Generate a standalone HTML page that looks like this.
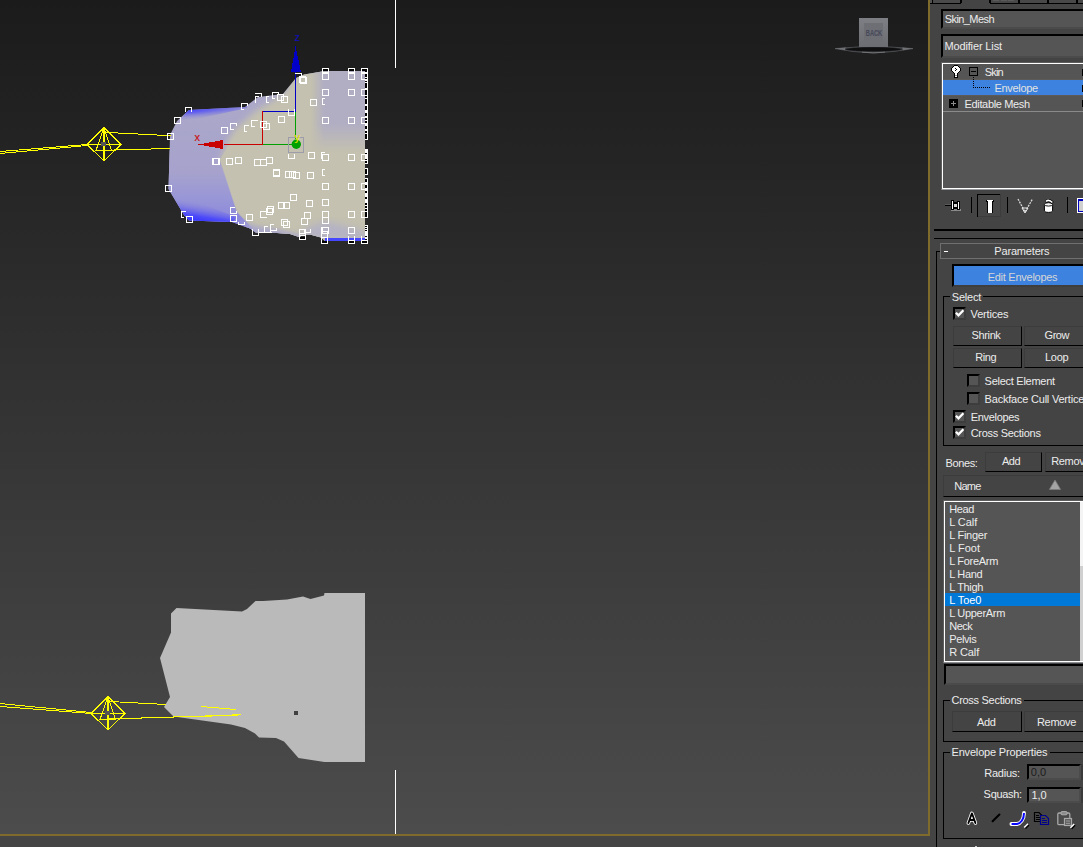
<!DOCTYPE html>
<html lang="en"><head><meta charset="utf-8"><title>Skin Envelope</title>
<style>
html,body{margin:0;padding:0;background:#444444;}
body{width:1083px;height:847px;overflow:hidden;position:relative;font-family:"Liberation Sans",sans-serif;font-size:11px;line-height:13px;color:#ececec;}
#vp{position:absolute;left:0;top:0;display:block;}
#panel{position:absolute;left:930px;top:0;width:153px;height:847px;background:#444444;overflow:hidden;}
#panel *{position:absolute;box-sizing:border-box;}
#panel svg{overflow:visible;}
.t{white-space:nowrap;height:13px;}
.btn{background:#444444;border:1px solid #000;border-top-color:#3c3c3c;border-left-color:#3c3c3c;}
.fld{background:#555555;border-top:2px solid #000;border-left:2px solid #000;border-bottom:2px solid #4b4b4b;border-right:2px solid #4b4b4b;}
.chk{background:#555555;border:2px solid #3d3d3d;border-top:2px solid #000;border-left:2px solid #000;}

</style></head>
<body>
<svg id="vp" width="930" height="847" viewBox="0 0 930 847" shape-rendering="crispEdges">
<defs>
<linearGradient id="bg" x1="0" y1="0" x2="0" y2="1">
<stop offset="0" stop-color="#1b1b1b"/><stop offset="1" stop-color="#4c4c4c"/>
</linearGradient>
<linearGradient id="cube" x1="0" y1="0" x2="0" y2="1">
<stop offset="0" stop-color="#7d7f84"/><stop offset="1" stop-color="#6b6d72"/>
</linearGradient>
<linearGradient id="lav" x1="0" y1="0" x2="0" y2="1">
<stop offset="0" stop-color="#aaa7c8"/><stop offset="0.45" stop-color="#a5a1cc"/><stop offset="1" stop-color="#8f8ad8"/>
</linearGradient>
<linearGradient id="rgt" x1="0" y1="0" x2="0" y2="1">
<stop offset="0" stop-color="#b1aec3"/><stop offset="0.6" stop-color="#b1aec3"/><stop offset="1" stop-color="#b1aec3" stop-opacity="0"/>
</linearGradient>
<filter id="b25" x="-20%" y="-20%" width="140%" height="140%"><feGaussianBlur stdDeviation="3"/></filter>
<filter id="b2" x="-20%" y="-20%" width="140%" height="140%"><feGaussianBlur stdDeviation="2"/></filter>
<filter id="b3" x="-20%" y="-20%" width="140%" height="140%"><feGaussianBlur stdDeviation="3.5"/></filter>
<filter id="b5" x="-30%" y="-30%" width="160%" height="160%"><feGaussianBlur stdDeviation="5"/></filter>
<clipPath id="mclip"><polygon points="170,137 171,133 177,121 189,110 245,107 258,97 283,94 296,78 304,74.5 322,71.5 330,71 365,71 365,241 325,241 321,237.6 310,234.6 305,234.6 299,237 296,236 290,234 277,233 256,232.8 250,228.5 232,222 189,220.5 184,215 168.5,189"/></clipPath>
</defs>
<rect x="0" y="0" width="928" height="834" fill="url(#bg)"/>
<rect x="0" y="836" width="930" height="11" fill="#444444"/>
<rect x="928" y="0" width="2" height="836" fill="#7f6c2c"/>
<rect x="0" y="834" width="930" height="2" fill="#7f6c2c"/>
<rect x="395" y="0" width="1" height="68" fill="#fff"/>
<rect x="395" y="770" width="1" height="64" fill="#fff"/>
<defs>
<linearGradient id="lavv" gradientUnits="userSpaceOnUse" x1="0" y1="105" x2="0" y2="222">
<stop offset="0" stop-color="#aba8c9"/><stop offset="0.58" stop-color="#a6a2cd"/><stop offset="0.8" stop-color="#9896d7"/><stop offset="1" stop-color="#8c87dc"/>
</linearGradient>
<linearGradient id="bei" gradientUnits="userSpaceOnUse" x1="232.5" y1="122.6" x2="246.5" y2="132">
<stop offset="0" stop-color="#c4c1b0" stop-opacity="0"/><stop offset="0.5" stop-color="#c4c1b0" stop-opacity="0.55"/><stop offset="1" stop-color="#c4c1b0"/>
</linearGradient>
<linearGradient id="rimT" gradientUnits="userSpaceOnUse" x1="215" y1="108" x2="215.6" y2="118">
<stop offset="0" stop-color="#4644fa"/><stop offset="0.3" stop-color="#5856f2" stop-opacity="0.9"/><stop offset="1" stop-color="#8a86dc" stop-opacity="0"/>
</linearGradient>
<linearGradient id="rimB" gradientUnits="userSpaceOnUse" x1="206" y1="222" x2="209" y2="204">
<stop offset="0" stop-color="#3a38ff"/><stop offset="0.25" stop-color="#4a48fa" stop-opacity="0.95"/><stop offset="1" stop-color="#8c87dc" stop-opacity="0"/>
</linearGradient>
<linearGradient id="rgtH" gradientUnits="userSpaceOnUse" x1="311" y1="0" x2="324" y2="0">
<stop offset="0" stop-color="#b1aec3" stop-opacity="0"/><stop offset="1" stop-color="#b1aec3"/>
</linearGradient>
<linearGradient id="rgtV" gradientUnits="userSpaceOnUse" x1="0" y1="124" x2="0" y2="152">
<stop offset="0" stop-color="#fff"/><stop offset="1" stop-color="#000"/>
</linearGradient>
<linearGradient id="rimTH" gradientUnits="userSpaceOnUse" x1="195" y1="0" x2="248" y2="0">
<stop offset="0" stop-color="#fff"/><stop offset="1" stop-color="#555"/>
</linearGradient>
<mask id="rimTM" maskUnits="userSpaceOnUse" x="160" y="90" width="100" height="50"><rect x="160" y="90" width="100" height="50" fill="url(#rimTH)"/></mask>
<mask id="rgtM" maskUnits="userSpaceOnUse" x="300" y="60" width="80" height="110"><rect x="300" y="60" width="80" height="110" fill="url(#rgtV)"/></mask>
</defs>
<g clip-path="url(#mclip)" shape-rendering="auto">
<rect x="160" y="60" width="210" height="190" fill="url(#lavv)"/>
<polygon points="220,160 228,140 234,130 245,120 257,110 282,95 300,70 380,60 380,250 256,240 250,228 236.5,212" fill="#c4c1b0" filter="url(#b25)"/>
<polygon points="220,159.5 237,211.5 256.5,232 300,240 330,240 330,150 250,130 232,140" fill="#c4c1b0"/>
<polygon points="219.5,160 236.5,212 256,232.5 240,236 160,230 160,150 205,151" fill="url(#lavv)"/>
<polygon points="179,123 188,108 247,105 247,108" fill="url(#rimT)" mask="url(#rimTM)"/>
<polygon points="170,194 184,215 189,222 233,223 236,217 172,192" fill="url(#rimB)"/>
<rect x="310" y="60" width="62" height="100" fill="url(#rgtH)" mask="url(#rgtM)"/>
<polygon points="298,239 306,228 326,221 346,226 368,233 368,240" fill="#b2b0c8" filter="url(#b3)" opacity="0.85"/>
<polygon points="238,220 256,226 276,229 300,235 300,240 254,236" fill="#a9a6cc" filter="url(#b2)" opacity="0.9"/>
<rect x="325" y="238" width="41" height="3" fill="#4646ff" shape-rendering="crispEdges"/>
</g>
<polygon shape-rendering="auto" points="160,658 171,632.5 171,613.5 176.5,608 242,611.5 247,609 255.5,601 263,601 287,599.5 303,596.5 310.5,599 324,595.5 324.5,593 365,593 365,762 324.5,762 298.5,758 284,741.5 276,738 259,737.5 255,733.5 245,728 231,724.5 173.5,716.5 164,707 170,697" fill="#bababa"/>
<rect x="294" y="711" width="4" height="4" fill="#404040"/>
<g stroke="#ffff00" stroke-width="1" fill="none">
<path d="M104,127.5 L121,144.5 L104,161 L87,144.5 Z"/>
<path d="M104,127.5 L96,150.5 L111.5,150.5 Z"/>
<path d="M87,144.5 H121"/>
<path d="M104,128 V161" stroke-width="2"/>
<path d="M0,151.5 L87,144.5"/>
<path d="M0,153.5 L87,145.5"/>
<path d="M106,132.4 L171,135.7"/>
<path d="M96,150.5 L170,148.5"/>
</g>
<rect x="101" y="142" width="5" height="4" fill="#555555"/>
<g stroke="#ffff00" stroke-width="1" fill="none">
<path d="M108,696.5 L125,713.5 L108,730 L91,713.5 Z"/>
<path d="M108,696.5 L100,719.5 L115.5,719.5 Z"/>
<path d="M91,713.5 H125"/>
<path d="M108,697 V730" stroke-width="2"/>
<path d="M0,703.5 L91,712.5"/>
<path d="M0,706.5 L91,713.5"/>
<path d="M110,701.5 L166,704.5"/>
<path d="M100,719.3 L241,714.9"/>
<path d="M201,706.5 L236,709.5"/>
<path d="M196,716.6 L212,716.2"/>
<path d="M232,714.4 L241,714.2"/>
</g>
<rect x="105" y="711" width="5" height="4" fill="#555555"/>
<rect x="224" y="144" width="39" height="1" fill="#c80000"/>
<rect x="262" y="111" width="1" height="34" fill="#c80000"/>
<rect x="263" y="111" width="33" height="1" fill="#0000c8"/>
<rect x="295" y="72" width="1" height="40" fill="#0000c8"/>
<rect x="263" y="144" width="30" height="1" fill="#00a000"/>
<rect x="295" y="112" width="1" height="27" fill="#00a000"/>
<polygon points="198,144.5 223,140 223,149" fill="#c80000"/>
<polygon points="295.5,46 291,72 301,72" fill="#0000c8"/>
<rect x="288.5" y="137.5" width="15" height="15" fill="none" stroke="#9c9caa"/>
<circle cx="296.3" cy="144.3" r="4.7" fill="#00a000" shape-rendering="auto"/>
<text x="294.6" y="41" font-family="Liberation Sans, sans-serif" font-size="11" fill="#1010b8" stroke="#1010b8" stroke-width="0.15">z</text>
<text x="194.6" y="141" font-family="Liberation Sans, sans-serif" font-size="11" fill="#cc1010" stroke="#cc1010" stroke-width="0.15">x</text>
<text x="294.6" y="141" font-family="Liberation Sans, sans-serif" font-size="11" fill="#e8e800" stroke="#e8e800" stroke-width="0.15">y</text>
<rect x="167.5" y="133.5" width="6" height="6" fill="none" stroke="#fff"/>
<rect x="174.5" y="117.5" width="6" height="6" fill="none" stroke="#fff"/>
<rect x="165.5" y="185.5" width="6" height="6" fill="none" stroke="#fff"/>
<rect x="186.5" y="216.5" width="6" height="6" fill="none" stroke="#fff"/>
<rect x="221.5" y="127.5" width="6" height="6" fill="none" stroke="#fff"/>
<rect x="260.5" y="121.5" width="6" height="6" fill="none" stroke="#fff"/>
<rect x="263.5" y="123.5" width="6" height="6" fill="none" stroke="#fff"/>
<rect x="277.5" y="94.5" width="6" height="6" fill="none" stroke="#fff"/>
<rect x="281.5" y="96.5" width="6" height="6" fill="none" stroke="#fff"/>
<rect x="299.5" y="76.5" width="6" height="6" fill="none" stroke="#fff"/>
<rect x="300.5" y="77.5" width="6" height="6" fill="none" stroke="#fff"/>
<rect x="310.5" y="99.5" width="6" height="6" fill="none" stroke="#fff"/>
<rect x="278.5" y="116.5" width="6" height="6" fill="none" stroke="#fff"/>
<rect x="226.5" y="158.5" width="6" height="6" fill="none" stroke="#fff"/>
<rect x="235.5" y="157.5" width="6" height="6" fill="none" stroke="#fff"/>
<rect x="254.5" y="159.5" width="6" height="6" fill="none" stroke="#fff"/>
<rect x="260.5" y="159.5" width="6" height="6" fill="none" stroke="#fff"/>
<rect x="266.5" y="157.5" width="6" height="6" fill="none" stroke="#fff"/>
<rect x="212.5" y="158.5" width="6" height="6" fill="none" stroke="#fff"/>
<rect x="213.5" y="158.5" width="6" height="6" fill="none" stroke="#fff"/>
<rect x="273.5" y="169.5" width="6" height="6" fill="none" stroke="#fff"/>
<rect x="273.5" y="170.5" width="6" height="6" fill="none" stroke="#fff"/>
<rect x="285.5" y="171.5" width="6" height="6" fill="none" stroke="#fff"/>
<rect x="289.5" y="171.5" width="6" height="6" fill="none" stroke="#fff"/>
<rect x="293.5" y="172.5" width="6" height="6" fill="none" stroke="#fff"/>
<rect x="307.5" y="172.5" width="6" height="6" fill="none" stroke="#fff"/>
<rect x="308.5" y="152.5" width="6" height="6" fill="none" stroke="#fff"/>
<rect x="322.5" y="154.5" width="6" height="6" fill="none" stroke="#fff"/>
<rect x="290.5" y="194.5" width="6" height="6" fill="none" stroke="#fff"/>
<rect x="278.5" y="202.5" width="6" height="6" fill="none" stroke="#fff"/>
<rect x="283.5" y="202.5" width="6" height="6" fill="none" stroke="#fff"/>
<rect x="306.5" y="200.5" width="6" height="6" fill="none" stroke="#fff"/>
<rect x="266.5" y="208.5" width="6" height="6" fill="none" stroke="#fff"/>
<rect x="267.5" y="206.5" width="6" height="6" fill="none" stroke="#fff"/>
<rect x="304.5" y="212.5" width="6" height="6" fill="none" stroke="#fff"/>
<rect x="301.5" y="218.5" width="6" height="6" fill="none" stroke="#fff"/>
<rect x="281.5" y="219.5" width="6" height="6" fill="none" stroke="#fff"/>
<rect x="283.5" y="221.5" width="6" height="6" fill="none" stroke="#fff"/>
<rect x="230.5" y="215.5" width="6" height="6" fill="none" stroke="#fff"/>
<rect x="246.5" y="214.5" width="6" height="6" fill="none" stroke="#fff"/>
<rect x="322.5" y="89.5" width="6" height="6" fill="none" stroke="#fff"/>
<rect x="322.5" y="117.5" width="6" height="6" fill="none" stroke="#fff"/>
<rect x="322.5" y="183.5" width="6" height="6" fill="none" stroke="#fff"/>
<rect x="322.5" y="199.5" width="6" height="6" fill="none" stroke="#fff"/>
<rect x="322.5" y="211.5" width="6" height="6" fill="none" stroke="#fff"/>
<rect x="322.5" y="217.5" width="6" height="6" fill="none" stroke="#fff"/>
<rect x="322.5" y="227.5" width="6" height="6" fill="none" stroke="#fff"/>
<rect x="348.5" y="89.5" width="6" height="6" fill="none" stroke="#fff"/>
<rect x="348.5" y="117.5" width="6" height="6" fill="none" stroke="#fff"/>
<rect x="348.5" y="154.5" width="6" height="6" fill="none" stroke="#fff"/>
<rect x="348.5" y="183.5" width="6" height="6" fill="none" stroke="#fff"/>
<rect x="348.5" y="211.5" width="6" height="6" fill="none" stroke="#fff"/>
<rect x="348.5" y="227.5" width="6" height="6" fill="none" stroke="#fff"/>
<rect x="361.5" y="89.5" width="6" height="6" fill="none" stroke="#fff"/>
<rect x="361.5" y="117.5" width="6" height="6" fill="none" stroke="#fff"/>
<rect x="361.5" y="154.5" width="6" height="6" fill="none" stroke="#fff"/>
<rect x="361.5" y="183.5" width="6" height="6" fill="none" stroke="#fff"/>
<rect x="361.5" y="211.5" width="6" height="6" fill="none" stroke="#fff"/>
<rect x="185" y="107" width="7" height="1" fill="#fff"/>
<rect x="185" y="107" width="1" height="5" fill="#fff"/>
<rect x="191" y="107" width="1" height="5" fill="#fff"/>
<rect x="241" y="103" width="7" height="1" fill="#fff"/>
<rect x="241" y="103" width="1" height="7" fill="#fff"/>
<rect x="241" y="109" width="3" height="1" fill="#fff"/>
<rect x="247" y="103" width="1" height="3" fill="#fff"/>
<rect x="255" y="93" width="7" height="1" fill="#fff"/>
<rect x="261" y="93" width="1" height="4" fill="#fff"/>
<rect x="255" y="96" width="4" height="1" fill="#fff"/>
<rect x="255" y="96" width="1" height="7" fill="#fff"/>
<rect x="255" y="100" width="1" height="3" fill="#fff"/>
<rect x="230" y="123" width="7" height="1" fill="#fff"/>
<rect x="230" y="123" width="1" height="7" fill="#fff"/>
<rect x="230" y="129" width="4" height="1" fill="#fff"/>
<rect x="236" y="123" width="1" height="3" fill="#fff"/>
<rect x="244" y="125" width="5" height="1" fill="#fff"/>
<rect x="244" y="125" width="1" height="7" fill="#fff"/>
<rect x="244" y="131" width="3" height="1" fill="#fff"/>
<rect x="251" y="120" width="7" height="1" fill="#fff"/>
<rect x="251" y="120" width="1" height="7" fill="#fff"/>
<rect x="251" y="126" width="4" height="1" fill="#fff"/>
<rect x="257" y="120" width="1" height="1" fill="#fff"/>
<rect x="266" y="96" width="1" height="7" fill="#fff"/>
<rect x="266" y="96" width="3" height="1" fill="#fff"/>
<rect x="266" y="102" width="3" height="1" fill="#fff"/>
<rect x="272" y="92" width="7" height="1" fill="#fff"/>
<rect x="272" y="92" width="1" height="7" fill="#fff"/>
<rect x="278" y="92" width="1" height="3" fill="#fff"/>
<rect x="272" y="98" width="3" height="1" fill="#fff"/>
<rect x="295" y="73" width="7" height="1" fill="#fff"/>
<rect x="301" y="73" width="1" height="3" fill="#fff"/>
<rect x="322" y="98" width="1" height="7" fill="#fff"/>
<rect x="322" y="98" width="3" height="1" fill="#fff"/>
<rect x="322" y="104" width="3" height="1" fill="#fff"/>
<rect x="322" y="169" width="1" height="7" fill="#fff"/>
<rect x="322" y="169" width="3" height="1" fill="#fff"/>
<rect x="322" y="175" width="3" height="1" fill="#fff"/>
<rect x="321" y="152" width="1" height="7" fill="#fff"/>
<rect x="321" y="152" width="4" height="1" fill="#fff"/>
<rect x="288" y="109" width="1" height="7" fill="#fff"/>
<rect x="294" y="109" width="1" height="7" fill="#fff"/>
<rect x="288" y="115" width="7" height="1" fill="#fff"/>
<rect x="288" y="154" width="1" height="5" fill="#fff"/>
<rect x="294" y="154" width="1" height="5" fill="#fff"/>
<rect x="288" y="158" width="7" height="1" fill="#fff"/>
<rect x="230" y="207" width="5" height="1" fill="#fff"/>
<rect x="230" y="207" width="1" height="7" fill="#fff"/>
<rect x="230" y="213" width="7" height="1" fill="#fff"/>
<rect x="236" y="211" width="1" height="3" fill="#fff"/>
<rect x="181" y="211" width="5" height="1" fill="#fff"/>
<rect x="181" y="211" width="1" height="7" fill="#fff"/>
<rect x="181" y="217" width="3" height="1" fill="#fff"/>
<rect x="238" y="224" width="7" height="1" fill="#fff"/>
<rect x="238" y="222" width="1" height="3" fill="#fff"/>
<rect x="244" y="222" width="1" height="3" fill="#fff"/>
<rect x="260" y="211" width="7" height="1" fill="#fff"/>
<rect x="260" y="211" width="1" height="7" fill="#fff"/>
<rect x="260" y="217" width="7" height="1" fill="#fff"/>
<rect x="252" y="229" width="1" height="7" fill="#fff"/>
<rect x="252" y="235" width="7" height="1" fill="#fff"/>
<rect x="258" y="229" width="1" height="7" fill="#fff"/>
<rect x="264" y="226" width="4" height="1" fill="#fff"/>
<rect x="264" y="226" width="1" height="7" fill="#fff"/>
<rect x="264" y="232" width="7" height="1" fill="#fff"/>
<rect x="270" y="230" width="1" height="3" fill="#fff"/>
<rect x="270" y="224" width="4" height="1" fill="#fff"/>
<rect x="270" y="224" width="1" height="7" fill="#fff"/>
<rect x="270" y="230" width="7" height="1" fill="#fff"/>
<rect x="276" y="228" width="1" height="3" fill="#fff"/>
<rect x="304" y="229" width="1" height="4" fill="#fff"/>
<rect x="310" y="229" width="1" height="4" fill="#fff"/>
<rect x="304" y="232" width="7" height="1" fill="#fff"/>
<rect x="258" y="232" width="14" height="1" fill="#fff"/>
<rect x="322.5" y="68.5" width="6" height="4" fill="none" stroke="#fff"/>
<rect x="322.5" y="73.5" width="6" height="6" fill="none" stroke="#fff"/>
<rect x="323" y="69" width="5" height="2" fill="#000"/>
<rect x="348.5" y="68.5" width="6" height="4" fill="none" stroke="#fff"/>
<rect x="348.5" y="73.5" width="6" height="6" fill="none" stroke="#fff"/>
<rect x="349" y="69" width="5" height="2" fill="#000"/>
<rect x="361.5" y="68.5" width="6" height="4" fill="none" stroke="#fff"/>
<rect x="361.5" y="73.5" width="6" height="6" fill="none" stroke="#fff"/>
<rect x="362" y="69" width="5" height="2" fill="#000"/>
<rect x="348" y="236" width="1" height="8" fill="#fff"/>
<rect x="354" y="236" width="1" height="8" fill="#fff"/>
<rect x="348" y="243" width="7" height="1" fill="#fff"/>
<rect x="348" y="240" width="7" height="1" fill="#fff"/>
<rect x="349" y="241" width="5" height="2" fill="#000"/>
<rect x="361" y="236" width="1" height="8" fill="#fff"/>
<rect x="367" y="236" width="1" height="8" fill="#fff"/>
<rect x="361" y="243" width="7" height="1" fill="#fff"/>
<rect x="361" y="240" width="7" height="1" fill="#fff"/>
<rect x="362" y="241" width="5" height="2" fill="#000"/>
<rect x="299.5" y="229.5" width="6" height="6" fill="none" stroke="#fff"/>
<rect x="299.5" y="233.5" width="6" height="6" fill="none" stroke="#fff"/>
<rect x="300" y="237" width="5" height="2" fill="#000"/>
<rect x="321.5" y="231.5" width="6" height="6" fill="none" stroke="#fff"/>
<rect x="321.5" y="237.5" width="6" height="6" fill="none" stroke="#fff"/>
<rect x="322" y="241" width="5" height="2" fill="#000"/>
<rect x="321" y="227" width="1" height="5" fill="#fff"/>
<rect x="367" y="68" width="1" height="72" fill="#fff"/>
<rect x="367" y="149" width="1" height="15" fill="#fff"/>
<rect x="367" y="168" width="1" height="7" fill="#fff"/>
<rect x="367" y="178" width="1" height="40" fill="#fff"/>
<rect x="367" y="225" width="1" height="19" fill="#fff"/>
<rect x="365" y="68" width="2" height="1" fill="#fff"/>
<rect x="365" y="69" width="2" height="1" fill="#000"/>
<rect x="365" y="70" width="2" height="1" fill="#000"/>
<rect x="365" y="71" width="2" height="1" fill="#000"/>
<rect x="365" y="72" width="2" height="1" fill="#fff"/>
<rect x="365" y="73" width="2" height="1" fill="#fff"/>
<rect x="365" y="74" width="2" height="1" fill="#000"/>
<rect x="365" y="75" width="2" height="1" fill="#000"/>
<rect x="365" y="76" width="2" height="1" fill="#000"/>
<rect x="365" y="77" width="2" height="1" fill="#fff"/>
<rect x="365" y="78" width="2" height="1" fill="#000"/>
<rect x="365" y="79" width="2" height="1" fill="#fff"/>
<rect x="365" y="80" width="2" height="1" fill="#fff"/>
<rect x="365" y="81" width="2" height="1" fill="#000"/>
<rect x="365" y="82" width="2" height="1" fill="#fff"/>
<rect x="365" y="83" width="2" height="1" fill="#000"/>
<rect x="365" y="84" width="2" height="1" fill="#000"/>
<rect x="365" y="85" width="2" height="1" fill="#000"/>
<rect x="365" y="86" width="2" height="1" fill="#000"/>
<rect x="365" y="87" width="2" height="1" fill="#000"/>
<rect x="365" y="88" width="2" height="1" fill="#fff"/>
<rect x="365" y="89" width="2" height="1" fill="#fff"/>
<rect x="365" y="90" width="2" height="1" fill="#000"/>
<rect x="365" y="91" width="2" height="1" fill="#000"/>
<rect x="365" y="92" width="2" height="1" fill="#000"/>
<rect x="365" y="93" width="2" height="1" fill="#000"/>
<rect x="365" y="94" width="2" height="1" fill="#000"/>
<rect x="365" y="95" width="2" height="1" fill="#fff"/>
<rect x="365" y="96" width="2" height="1" fill="#000"/>
<rect x="365" y="97" width="2" height="1" fill="#000"/>
<rect x="365" y="98" width="2" height="1" fill="#fff"/>
<rect x="365" y="99" width="2" height="1" fill="#000"/>
<rect x="365" y="100" width="2" height="1" fill="#000"/>
<rect x="365" y="101" width="2" height="1" fill="#000"/>
<rect x="365" y="102" width="2" height="1" fill="#000"/>
<rect x="365" y="103" width="2" height="1" fill="#000"/>
<rect x="365" y="104" width="2" height="1" fill="#fff"/>
<rect x="365" y="105" width="2" height="1" fill="#fff"/>
<rect x="365" y="106" width="2" height="1" fill="#000"/>
<rect x="365" y="107" width="2" height="1" fill="#000"/>
<rect x="365" y="108" width="2" height="1" fill="#000"/>
<rect x="365" y="109" width="2" height="1" fill="#000"/>
<rect x="365" y="110" width="2" height="1" fill="#fff"/>
<rect x="365" y="111" width="2" height="1" fill="#fff"/>
<rect x="365" y="112" width="2" height="1" fill="#fff"/>
<rect x="365" y="113" width="2" height="1" fill="#000"/>
<rect x="365" y="114" width="2" height="1" fill="#000"/>
<rect x="365" y="115" width="2" height="1" fill="#000"/>
<rect x="365" y="116" width="2" height="1" fill="#fff"/>
<rect x="365" y="117" width="2" height="1" fill="#fff"/>
<rect x="365" y="118" width="2" height="1" fill="#000"/>
<rect x="365" y="119" width="2" height="1" fill="#000"/>
<rect x="365" y="120" width="2" height="1" fill="#fff"/>
<rect x="365" y="121" width="2" height="1" fill="#000"/>
<rect x="365" y="122" width="2" height="1" fill="#000"/>
<rect x="365" y="123" width="2" height="1" fill="#fff"/>
<rect x="365" y="124" width="2" height="1" fill="#fff"/>
<rect x="365" y="125" width="2" height="1" fill="#fff"/>
<rect x="365" y="126" width="2" height="1" fill="#000"/>
<rect x="365" y="127" width="2" height="1" fill="#000"/>
<rect x="365" y="128" width="2" height="1" fill="#000"/>
<rect x="365" y="129" width="2" height="1" fill="#fff"/>
<rect x="365" y="130" width="2" height="1" fill="#fff"/>
<rect x="365" y="131" width="2" height="1" fill="#000"/>
<rect x="365" y="132" width="2" height="1" fill="#000"/>
<rect x="365" y="133" width="2" height="1" fill="#fff"/>
<rect x="365" y="134" width="2" height="1" fill="#000"/>
<rect x="365" y="135" width="2" height="1" fill="#000"/>
<rect x="365" y="136" width="2" height="1" fill="#000"/>
<rect x="365" y="137" width="2" height="1" fill="#000"/>
<rect x="365" y="138" width="2" height="1" fill="#000"/>
<rect x="365" y="139" width="2" height="1" fill="#fff"/>
<rect x="365" y="149" width="2" height="1" fill="#fff"/>
<rect x="365" y="150" width="2" height="1" fill="#fff"/>
<rect x="365" y="151" width="2" height="1" fill="#fff"/>
<rect x="365" y="152" width="2" height="1" fill="#fff"/>
<rect x="365" y="153" width="2" height="1" fill="#000"/>
<rect x="365" y="154" width="2" height="1" fill="#fff"/>
<rect x="365" y="155" width="2" height="1" fill="#fff"/>
<rect x="365" y="156" width="2" height="1" fill="#fff"/>
<rect x="365" y="157" width="2" height="1" fill="#fff"/>
<rect x="365" y="158" width="2" height="1" fill="#fff"/>
<rect x="365" y="159" width="2" height="1" fill="#000"/>
<rect x="365" y="160" width="2" height="1" fill="#fff"/>
<rect x="365" y="161" width="2" height="1" fill="#000"/>
<rect x="365" y="162" width="2" height="1" fill="#000"/>
<rect x="365" y="163" width="2" height="1" fill="#fff"/>
<rect x="365" y="168" width="2" height="1" fill="#fff"/>
<rect x="365" y="169" width="2" height="1" fill="#000"/>
<rect x="365" y="170" width="2" height="1" fill="#000"/>
<rect x="365" y="171" width="2" height="1" fill="#000"/>
<rect x="365" y="172" width="2" height="1" fill="#000"/>
<rect x="365" y="173" width="2" height="1" fill="#000"/>
<rect x="365" y="174" width="2" height="1" fill="#fff"/>
<rect x="365" y="178" width="2" height="1" fill="#fff"/>
<rect x="365" y="179" width="2" height="1" fill="#000"/>
<rect x="365" y="180" width="2" height="1" fill="#000"/>
<rect x="365" y="181" width="2" height="1" fill="#000"/>
<rect x="365" y="182" width="2" height="1" fill="#fff"/>
<rect x="365" y="183" width="2" height="1" fill="#fff"/>
<rect x="365" y="184" width="2" height="1" fill="#fff"/>
<rect x="365" y="185" width="2" height="1" fill="#000"/>
<rect x="365" y="186" width="2" height="1" fill="#000"/>
<rect x="365" y="187" width="2" height="1" fill="#000"/>
<rect x="365" y="188" width="2" height="1" fill="#fff"/>
<rect x="365" y="189" width="2" height="1" fill="#fff"/>
<rect x="365" y="190" width="2" height="1" fill="#fff"/>
<rect x="365" y="191" width="2" height="1" fill="#000"/>
<rect x="365" y="192" width="2" height="1" fill="#000"/>
<rect x="365" y="193" width="2" height="1" fill="#fff"/>
<rect x="365" y="194" width="2" height="1" fill="#fff"/>
<rect x="365" y="195" width="2" height="1" fill="#fff"/>
<rect x="365" y="196" width="2" height="1" fill="#fff"/>
<rect x="365" y="197" width="2" height="1" fill="#000"/>
<rect x="365" y="198" width="2" height="1" fill="#000"/>
<rect x="365" y="199" width="2" height="1" fill="#fff"/>
<rect x="365" y="200" width="2" height="1" fill="#fff"/>
<rect x="365" y="201" width="2" height="1" fill="#fff"/>
<rect x="365" y="202" width="2" height="1" fill="#fff"/>
<rect x="365" y="203" width="2" height="1" fill="#000"/>
<rect x="365" y="204" width="2" height="1" fill="#000"/>
<rect x="365" y="205" width="2" height="1" fill="#fff"/>
<rect x="365" y="206" width="2" height="1" fill="#000"/>
<rect x="365" y="207" width="2" height="1" fill="#000"/>
<rect x="365" y="208" width="2" height="1" fill="#fff"/>
<rect x="365" y="209" width="2" height="1" fill="#000"/>
<rect x="365" y="210" width="2" height="1" fill="#000"/>
<rect x="365" y="211" width="2" height="1" fill="#fff"/>
<rect x="365" y="212" width="2" height="1" fill="#000"/>
<rect x="365" y="213" width="2" height="1" fill="#000"/>
<rect x="365" y="214" width="2" height="1" fill="#000"/>
<rect x="365" y="215" width="2" height="1" fill="#000"/>
<rect x="365" y="216" width="2" height="1" fill="#000"/>
<rect x="365" y="217" width="2" height="1" fill="#fff"/>
<rect x="365" y="225" width="2" height="1" fill="#fff"/>
<rect x="365" y="226" width="2" height="1" fill="#000"/>
<rect x="365" y="227" width="2" height="1" fill="#fff"/>
<rect x="365" y="228" width="2" height="1" fill="#000"/>
<rect x="365" y="229" width="2" height="1" fill="#fff"/>
<rect x="365" y="230" width="2" height="1" fill="#000"/>
<rect x="365" y="231" width="2" height="1" fill="#fff"/>
<rect x="365" y="232" width="2" height="1" fill="#fff"/>
<rect x="365" y="233" width="2" height="1" fill="#fff"/>
<rect x="365" y="234" width="2" height="1" fill="#fff"/>
<rect x="365" y="235" width="2" height="1" fill="#fff"/>
<rect x="365" y="236" width="2" height="1" fill="#000"/>
<rect x="365" y="237" width="2" height="1" fill="#fff"/>
<rect x="365" y="238" width="2" height="1" fill="#fff"/>
<rect x="365" y="239" width="2" height="1" fill="#000"/>
<rect x="365" y="240" width="2" height="1" fill="#fff"/>
<rect x="365" y="241" width="2" height="1" fill="#000"/>
<rect x="365" y="242" width="2" height="1" fill="#000"/>
<rect x="365" y="243" width="2" height="1" fill="#fff"/>
<g shape-rendering="auto">
<path d="M835,48.6 Q855,46.8 873.5,46.8 Q893,46.8 913,48.6 Q893,52.2 873.5,53 Q853,52.2 835,48.6 Z" fill="#2a2b2d" stroke="#64666a" stroke-width="0.7"/>
<path d="M835.5,48.6 L846,47.6 L845,50.2 Z M912.5,48.6 L902,47.6 L903,50.2 Z" fill="#707276"/>
<ellipse cx="873.5" cy="49.3" rx="28.5" ry="2.5" fill="#0f0f10" stroke="#4a4c50" stroke-width="0.6"/>
<path d="M862,52.2 Q873.5,53.4 885,52.2" fill="none" stroke="#7a7c80" stroke-width="0.8"/>
</g>
<rect x="859" y="18" width="29" height="29" fill="url(#cube)"/>
<rect x="864" y="23" width="19" height="19" fill="#6d6f75"/>
<text x="874" y="35.9" text-anchor="middle" font-family="Liberation Sans, sans-serif" font-weight="bold" font-size="9.4" textLength="16.4" lengthAdjust="spacingAndGlyphs" fill="#484a5a" stroke="#484a5a" stroke-width="0.2" shape-rendering="auto">BACK</text>
</svg>
<div id="panel">
<div style="left:0px;top:0px;width:31px;height:3px;background:#4a4a4a;"></div>
<div style="left:0px;top:0px;width:2px;height:3px;background:#525252;"></div>
<div style="left:0px;top:3px;width:31px;height:1px;background:#000;"></div>
<div style="left:2px;top:0px;width:1px;height:3px;background:#000;"></div>
<div style="left:30px;top:0px;width:2px;height:3px;background:#000;"></div>
<div style="left:59px;top:0px;width:94px;height:3px;background:#484848;"></div>
<div style="left:60px;top:3px;width:93px;height:1px;background:#000;"></div>
<div style="left:59px;top:0px;width:2px;height:3px;background:#000;"></div>
<div style="left:88px;top:0px;width:2px;height:3px;background:#000;"></div>
<div style="left:117px;top:0px;width:2px;height:3px;background:#000;"></div>
<div style="left:146px;top:0px;width:2px;height:3px;background:#000;"></div>
<div style="left:63px;top:0px;width:6px;height:1px;background:#5a5a5a;"></div>
<div style="left:71px;top:0px;width:6px;height:1px;background:#5a5a5a;"></div>
<div style="left:78px;top:0px;width:6px;height:1px;background:#5a5a5a;"></div>
<div class="fld" style="left:11px;top:9px;width:150px;height:20px;"></div>
<div class="fld" style="left:11px;top:34px;width:150px;height:24px;"></div>
<div style="left:11px;top:62px;width:150px;height:128px;background:#444;border:1px solid #5e5e5e;border-bottom-color:#969a9e;border-right:0;"></div>
<div style="left:12px;top:63px;width:150px;height:126px;background:#555555;border:1px solid #fff;border-right:0;"></div>
<div style="left:13px;top:79px;width:150px;height:17px;background:#5d5a59;"></div>
<div style="left:13px;top:80px;width:150px;height:15px;background:#3c82de;"></div>
<div style="left:13px;top:111px;width:150px;height:1px;background:#8a8a8a;"></div>
<svg width="10" height="13" viewBox="0 0 10 13" shape-rendering="crispEdges" style="left:21px;top:65px"><rect x="3" y="0" width="4" height="1" fill="#000"/><rect x="2" y="1" width="1" height="1" fill="#000"/><rect x="3" y="1" width="4" height="1" fill="#fff"/><rect x="7" y="1" width="1" height="1" fill="#000"/><rect x="1" y="2" width="1" height="1" fill="#000"/><rect x="2" y="2" width="6" height="1" fill="#fff"/><rect x="8" y="2" width="1" height="1" fill="#000"/><rect x="0" y="3" width="1" height="1" fill="#000"/><rect x="1" y="3" width="3" height="1" fill="#fff"/><rect x="4" y="3" width="1" height="1" fill="#000"/><rect x="5" y="3" width="4" height="1" fill="#fff"/><rect x="9" y="3" width="1" height="1" fill="#000"/><rect x="0" y="4" width="1" height="1" fill="#000"/><rect x="1" y="4" width="4" height="1" fill="#fff"/><rect x="5" y="4" width="1" height="1" fill="#000"/><rect x="6" y="4" width="3" height="1" fill="#fff"/><rect x="9" y="4" width="1" height="1" fill="#000"/><rect x="0" y="5" width="1" height="1" fill="#000"/><rect x="1" y="5" width="3" height="1" fill="#fff"/><rect x="4" y="5" width="1" height="1" fill="#000"/><rect x="5" y="5" width="4" height="1" fill="#fff"/><rect x="9" y="5" width="1" height="1" fill="#000"/><rect x="1" y="6" width="1" height="1" fill="#000"/><rect x="2" y="6" width="6" height="1" fill="#fff"/><rect x="8" y="6" width="1" height="1" fill="#000"/><rect x="2" y="7" width="1" height="1" fill="#000"/><rect x="3" y="7" width="4" height="1" fill="#fff"/><rect x="7" y="7" width="1" height="1" fill="#000"/><rect x="3" y="8" width="1" height="1" fill="#000"/><rect x="4" y="8" width="2" height="1" fill="#fff"/><rect x="6" y="8" width="1" height="1" fill="#000"/><rect x="3" y="9" width="1" height="1" fill="#000"/><rect x="4" y="9" width="2" height="1" fill="#fff"/><rect x="6" y="9" width="1" height="1" fill="#000"/><rect x="3" y="10" width="1" height="1" fill="#000"/><rect x="4" y="10" width="2" height="1" fill="#9a9a9a"/><rect x="6" y="10" width="1" height="1" fill="#000"/><rect x="3" y="11" width="1" height="1" fill="#000"/><rect x="4" y="11" width="2" height="1" fill="#fff"/><rect x="6" y="11" width="1" height="1" fill="#000"/><rect x="3" y="12" width="4" height="1" fill="#000"/></svg>
<div style="left:39px;top:67px;width:9px;height:9px;border:1px solid #000;"></div>
<div style="left:41px;top:71px;width:5px;height:1px;background:#000;"></div>
<div style="left:43px;top:77px;width:1px;height:1px;background:#000;"></div>
<div style="left:43px;top:79px;width:1px;height:1px;background:#000;"></div>
<div style="left:43px;top:81px;width:1px;height:1px;background:#000;"></div>
<div style="left:43px;top:83px;width:1px;height:1px;background:#000;"></div>
<div style="left:43px;top:85px;width:1px;height:1px;background:#000;"></div>
<div style="left:43px;top:87px;width:1px;height:1px;background:#000;"></div>
<div style="left:45px;top:87px;width:1px;height:1px;background:#000;"></div>
<div style="left:47px;top:87px;width:1px;height:1px;background:#000;"></div>
<div style="left:49px;top:87px;width:1px;height:1px;background:#000;"></div>
<div style="left:51px;top:87px;width:1px;height:1px;background:#000;"></div>
<div style="left:53px;top:87px;width:1px;height:1px;background:#000;"></div>
<div style="left:55px;top:87px;width:1px;height:1px;background:#000;"></div>
<div style="left:57px;top:87px;width:1px;height:1px;background:#000;"></div>
<div style="left:59px;top:87px;width:1px;height:1px;background:#000;"></div>
<div style="left:19px;top:99px;width:9px;height:9px;background:#000;"></div>
<div style="left:21px;top:103px;width:5px;height:1px;background:#8c8c8c;"></div>
<div style="left:23px;top:101px;width:1px;height:5px;background:#8c8c8c;"></div>
<div style="left:152px;top:69px;width:1px;height:7px;background:#000;"></div>
<div style="left:152px;top:85px;width:1px;height:7px;background:#000;"></div>
<div style="left:152px;top:100px;width:1px;height:7px;background:#000;"></div>
<svg width="140" height="24" viewBox="0 0 140 24" style="left:13px;top:193px" shape-rendering="crispEdges"><rect x="2" y="12" width="7" height="1" fill="#000"/><rect x="2" y="11" width="6" height="1" fill="#5a5a5a"/><rect x="8" y="16" width="10" height="2" fill="#8a8a8a"/><rect x="8" y="9" width="1" height="8" fill="#8a8a8a"/><rect x="8" y="7" width="3" height="10" fill="#000"/><rect x="14" y="8" width="3" height="9" fill="#000"/><rect x="10" y="9" width="5" height="7" fill="#000"/><rect x="9" y="8" width="1" height="8" fill="#fff"/><rect x="15" y="9" width="1" height="7" fill="#fff"/><rect x="11" y="11" width="3" height="3" fill="#d8d8d8"/><rect x="28" y="4" width="1" height="16" fill="#000"/><rect x="64" y="4" width="1" height="16" fill="#000"/><rect x="124" y="4" width="1" height="16" fill="#000"/><rect x="34" y="1" width="24" height="23" fill="#3c3c3c"/><rect x="34" y="1" width="23" height="1" fill="#000"/><rect x="34" y="1" width="1" height="23" fill="#000"/><rect x="35" y="2" width="22" height="21" fill="#464646"/><rect x="43" y="7" width="8" height="2" fill="#000"/><rect x="44" y="8" width="6" height="12" fill="#000"/><rect x="44" y="7" width="6" height="1" fill="#fff"/><rect x="45" y="8" width="4" height="12" fill="#fff"/><g shape-rendering="auto"><path d="M75,6 L82,19 L89.5,6" fill="none" stroke="#d8d8d8" stroke-width="1.3" stroke-dasharray="2 1"/><path d="M79,15 L85,15 L82,20 Z" fill="none" stroke="#e8e8e8" stroke-width="1"/></g><g shape-rendering="auto"><path d="M101.4,11.4 L101.4,17.2 Q101.4,19.4 105.5,19.4 Q109.6,19.4 109.6,17.2 L109.6,11.4 Z" fill="#fff" stroke="#000" stroke-width="1"/><ellipse cx="105.5" cy="11.4" rx="4.1" ry="1.7" fill="#f4f4f4" stroke="#000" stroke-width="0.9"/><path d="M102.8,8.6 Q106,5.6 109.8,10" fill="none" stroke="#000" stroke-width="3"/><path d="M103,8.4 Q106,5.8 109.4,9.6" fill="none" stroke="#fff" stroke-width="1.5"/></g><rect x="134" y="5" width="8" height="15" fill="#fff"/><rect x="135" y="6" width="7" height="13" fill="#0000c0"/><rect x="136" y="8" width="6" height="10" fill="#cfcfcf"/></svg>
<div style="left:4px;top:229px;width:160px;height:2px;background:#000;"></div>
<div style="left:4px;top:238px;width:160px;height:1px;background:#000;"></div>
<div style="left:6px;top:251px;width:1px;height:600px;background:#000;"></div>
<div style="left:6px;top:251px;width:5px;height:1px;background:#000;"></div>
<div style="left:10px;top:243px;width:150px;height:16px;background:#444444;border:1px solid #6f6f6f;"></div>
<div style="left:14px;top:251px;width:4px;height:1px;background:#ffffff;"></div>
<div style="left:22px;top:264px;width:140px;height:23px;background:#3c82de;border-top:2px solid #000;border-left:2px solid #000;border-bottom:2px solid #3e3e3e;"></div>
<div style="left:13px;top:296px;width:1px;height:150px;background:#000;"></div>
<div style="left:13px;top:296px;width:7px;height:1px;background:#000;"></div>
<div style="left:53px;top:296px;width:110px;height:1px;background:#000;"></div>
<div style="left:13px;top:445px;width:150px;height:1px;background:#000;"></div>
<div class="chk" style="left:23px;top:307px;width:13px;height:13px;"><svg width="9" height="9" viewBox="0 0 9 9" style="left:0px;top:0px"><path d="M0.9,3.7 L3.5,6.4 L8.4,1.3" fill="none" stroke="#fff" stroke-width="2.3"/></svg></div>
<div class="btn" style="left:23px;top:326px;width:69px;height:20px;"></div>
<div class="btn" style="left:94px;top:326px;width:69px;height:20px;"></div>
<div class="btn" style="left:23px;top:348px;width:69px;height:20px;"></div>
<div class="btn" style="left:94px;top:348px;width:69px;height:20px;"></div>
<div class="chk" style="left:37px;top:374px;width:13px;height:13px;"></div>
<div class="chk" style="left:37px;top:392px;width:13px;height:13px;"></div>
<div class="chk" style="left:23px;top:410px;width:13px;height:13px;"><svg width="9" height="9" viewBox="0 0 9 9" style="left:0px;top:0px"><path d="M0.9,3.7 L3.5,6.4 L8.4,1.3" fill="none" stroke="#fff" stroke-width="2.3"/></svg></div>
<div class="chk" style="left:23px;top:426px;width:13px;height:13px;"><svg width="9" height="9" viewBox="0 0 9 9" style="left:0px;top:0px"><path d="M0.9,3.7 L3.5,6.4 L8.4,1.3" fill="none" stroke="#fff" stroke-width="2.3"/></svg></div>
<div class="btn" style="left:55px;top:452px;width:57px;height:20px;"></div>
<div class="btn" style="left:115px;top:452px;width:57px;height:20px;"></div>
<div class="btn" style="left:13px;top:475px;width:150px;height:22px;"></div>
<svg width="14" height="12" viewBox="0 0 14 12" style="left:118px;top:479px"><path d="M7,1 L12.6,10.5 L1.4,10.5 Z" fill="#a4a4a4" stroke="#7c7c7c" stroke-width="0.8"/></svg>
<div style="left:13px;top:500px;width:150px;height:163px;background:#444;border:1px solid #5e5e5e;border-bottom-color:#8a8e92;border-right:0;"></div>
<div style="left:14px;top:501px;width:150px;height:161px;background:#555555;border:1px solid #fff;border-right:0;"></div>
<div style="left:15px;top:593px;width:135px;height:13px;background:#0078d7;"></div>
<div style="left:150px;top:502px;width:3px;height:159px;background:#d0d0d0;"></div>
<div style="left:150px;top:502px;width:3px;height:64px;background:#f4f4f4;"></div>
<div class="fld" style="left:14px;top:664px;width:150px;height:21px;"></div>
<div style="left:13px;top:700px;width:1px;height:42px;background:#000;"></div>
<div style="left:13px;top:700px;width:7px;height:1px;background:#000;"></div>
<div style="left:94px;top:700px;width:69px;height:1px;background:#000;"></div>
<div style="left:13px;top:741px;width:150px;height:1px;background:#000;"></div>
<div class="btn" style="left:22px;top:711px;width:70px;height:21px;"></div>
<div class="btn" style="left:94px;top:711px;width:70px;height:21px;"></div>
<div style="left:13px;top:752px;width:1px;height:87px;background:#000;"></div>
<div style="left:13px;top:752px;width:7px;height:1px;background:#000;"></div>
<div style="left:120px;top:752px;width:43px;height:1px;background:#000;"></div>
<div style="left:13px;top:838px;width:150px;height:1px;background:#000;"></div>
<div class="fld" style="left:97px;top:764px;width:54px;height:16px;"></div>
<div class="fld" style="left:97px;top:787px;width:54px;height:16px;"></div>
<div style="left:151px;top:764px;width:2px;height:16px;background:#3a3a3a;"></div>
<div style="left:151px;top:787px;width:2px;height:16px;background:#3a3a3a;"></div>
<svg width="115" height="22" viewBox="0 0 115 22" style="left:33px;top:809px"><path d="M5.4,14 L8.9,4.4 L12.4,14 M6.8,11 L11,11" fill="none" stroke="#fff" stroke-width="3.6" stroke-linejoin="round" stroke-linecap="round" stroke-dasharray="1.4 0.6"/><path d="M5.4,14 L8.9,4.4 L12.4,14 M6.8,11 L11,11" fill="none" stroke="#000" stroke-width="1.9" stroke-linejoin="round" stroke-linecap="round"/><rect x="8.4" y="7.6" width="1" height="2.2" fill="#e8e8e8"/><path d="M29.6,12.2 L36.4,5.6" fill="none" stroke="#000" stroke-width="2.1" stroke-linecap="round"/><path d="M48.4,15 L54,15 C57.5,14.5 61,10.5 61,4" fill="none" stroke="#fff" stroke-width="3.8" stroke-linecap="round"/><path d="M48.6,15 L54,15 C57.5,14.5 61,10.5 61,4" fill="none" stroke="#0808ff" stroke-width="2" stroke-linecap="butt"/><path d="M61.8,18.8 L65.2,15.4" stroke="#000" stroke-width="1.4" transform="translate(0.7,0.7)"/><path d="M61.2,18.6 L65,14.8" stroke="#fff" stroke-width="1.4"/><path d="M71.5,3.5 L76,3.5 L78.5,6 L78.5,12.5 L71.5,12.5 Z" fill="#444" stroke="#000" stroke-width="1.2"/><path d="M73,6.5 H76 M73,8.5 H77 M73,10.5 H77" stroke="#000" stroke-width="1"/><path d="M77.5,6.5 L82.5,6.5 L85.5,9.5 L85.5,15.5 L77.5,15.5 Z" fill="#444" stroke="#00008c" stroke-width="1.2"/><path d="M79,9.5 H82 M79,11.5 H84 M79,13.5 H84" stroke="#00008c" stroke-width="1"/><rect x="94.8" y="4" width="12" height="11.6" rx="1.2" fill="#4a4a4a" stroke="#a8a8a8" stroke-width="1.3"/><rect x="98" y="2.6" width="6" height="3.2" rx="1" fill="#8a8a8a" stroke="#b4b4b4" stroke-width="0.9"/><rect x="101.5" y="9.5" width="7" height="7" fill="#5a5a5a" stroke="#a8a8a8" stroke-width="1.2"/><path d="M103,12 H107 M103,14.3 H107" stroke="#a8a8a8" stroke-width="0.9"/><path d="M108,19 L111.4,15.6" stroke="#000" stroke-width="1.4" transform="translate(0.7,0.7)"/><path d="M107.4,18.8 L111.2,15" stroke="#fff" stroke-width="1.4"/></svg>
<div style="left:45px;top:846px;width:2px;height:1px;background:#c8c8c8;"></div>
<span class="t " style="left:14.7px;top:13px;letter-spacing:-0.567px;">Skin_Mesh</span>
<span class="t " style="left:14.4px;top:40px;letter-spacing:-0.136px;">Modifier List</span>
<span class="t " style="left:54.8px;top:66px;letter-spacing:-0.830px;">Skin</span>
<span class="t " style="left:64.5px;top:82px;letter-spacing:-0.317px;color:#e2e2e2;">Envelope</span>
<span class="t " style="left:34.5px;top:98px;letter-spacing:-0.338px;">Editable Mesh</span>
<span class="t " style="left:64.3px;top:245px;letter-spacing:-0.175px;">Parameters</span>
<span class="t " style="left:57.7px;top:271px;letter-spacing:-0.266px;color:#d6d6d6;">Edit Envelopes</span>
<span class="t " style="left:21.8px;top:291px;letter-spacing:-0.232px;">Select</span>
<span class="t " style="left:40.6px;top:308px;letter-spacing:-0.165px;">Vertices</span>
<span class="t " style="left:41.6px;top:329px;letter-spacing:-0.380px;">Shrink</span>
<span class="t " style="left:114.6px;top:329px;letter-spacing:-0.480px;">Grow</span>
<span class="t " style="left:45.2px;top:351px;letter-spacing:-0.436px;">Ring</span>
<span class="t " style="left:115.0px;top:351px;letter-spacing:-0.281px;">Loop</span>
<span class="t " style="left:54.6px;top:375px;letter-spacing:-0.273px;">Select Element</span>
<span class="t " style="left:54.6px;top:393px;letter-spacing:-0.211px;">Backface Cull Vertices</span>
<span class="t " style="left:40.7px;top:411px;letter-spacing:-0.315px;">Envelopes</span>
<span class="t " style="left:40.7px;top:427px;letter-spacing:-0.288px;">Cross Sections</span>
<span class="t " style="left:15.5px;top:457px;letter-spacing:-0.373px;">Bones:</span>
<span class="t " style="left:71.9px;top:455px;letter-spacing:-0.391px;">Add</span>
<span class="t " style="left:121.2px;top:455px;letter-spacing:-0.322px;">Remove</span>
<span class="t " style="left:24.3px;top:480px;letter-spacing:-0.755px;">Name</span>
<span class="t " style="left:19.2px;top:503px;letter-spacing:-0.342px;">Head</span>
<span class="t " style="left:19.2px;top:516px;letter-spacing:-0.041px;">L Calf</span>
<span class="t " style="left:19.2px;top:529px;letter-spacing:-0.260px;">L Finger</span>
<span class="t " style="left:19.2px;top:542px;letter-spacing:0.003px;">L Foot</span>
<span class="t " style="left:19.2px;top:555px;letter-spacing:-0.300px;">L ForeArm</span>
<span class="t " style="left:19.2px;top:568px;letter-spacing:-0.339px;">L Hand</span>
<span class="t " style="left:19.2px;top:581px;letter-spacing:-0.307px;">L Thigh</span>
<span class="t " style="left:19.2px;top:594px;letter-spacing:-0.040px;color:#ffffff;">L Toe0</span>
<span class="t " style="left:19.2px;top:607px;letter-spacing:-0.304px;">L UpperArm</span>
<span class="t " style="left:19.2px;top:620px;letter-spacing:-0.475px;">Neck</span>
<span class="t " style="left:19.2px;top:633px;letter-spacing:-0.372px;">Pelvis</span>
<span class="t " style="left:19.2px;top:646px;letter-spacing:-0.102px;">R Calf</span>
<span class="t " style="left:21.5px;top:694px;letter-spacing:-0.288px;">Cross Sections</span>
<span class="t " style="left:47.0px;top:716px;letter-spacing:-0.391px;">Add</span>
<span class="t " style="left:107.0px;top:716px;letter-spacing:-0.322px;">Remove</span>
<span class="t " style="left:21.5px;top:746px;letter-spacing:-0.176px;">Envelope Properties</span>
<span class="t " style="left:54.3px;top:767px;letter-spacing:-0.246px;">Radius:</span>
<span class="t " style="left:100.7px;top:766px;letter-spacing:0.081px;color:#1c1c1c;">0,0</span>
<span class="t " style="left:53.6px;top:788px;letter-spacing:-0.304px;">Squash:</span>
<span class="t " style="left:101.5px;top:789px;letter-spacing:-0.119px;">1,0</span>
</div>
</body></html>
